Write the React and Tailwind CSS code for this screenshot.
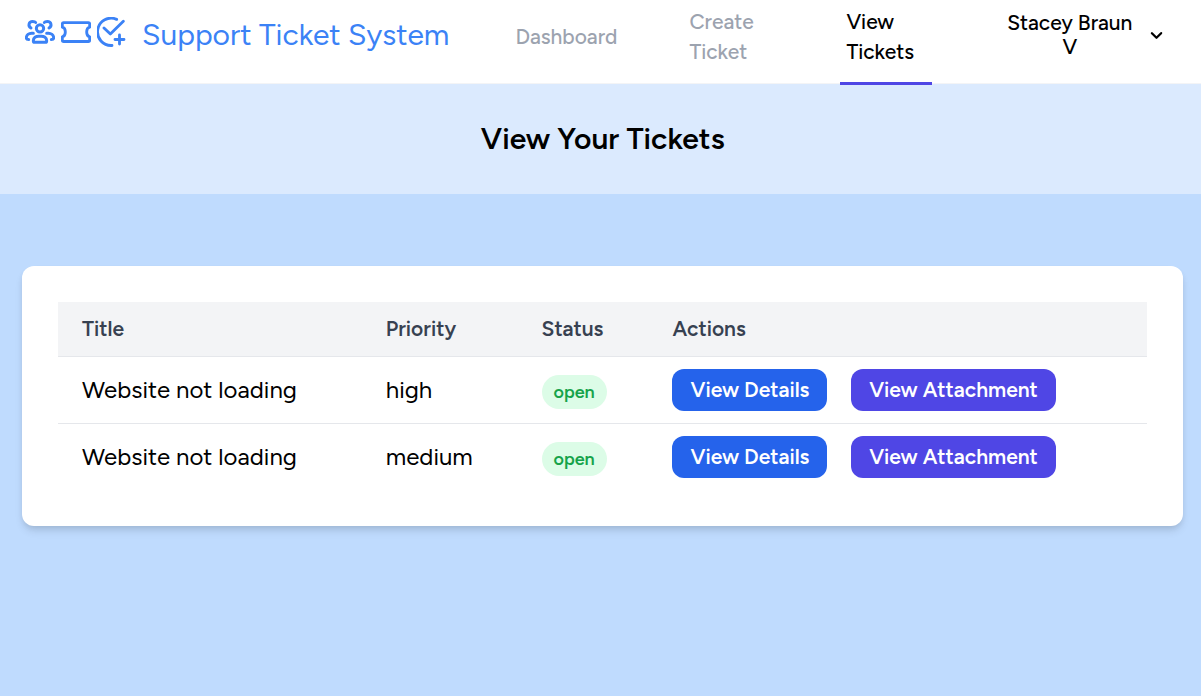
import React from "react";

const nav = "font-medium text-[21px] leading-[30px]";

function GroupIcon() {
  return (
    <svg className="size-[30px]" viewBox="0 0 90 90" fill="none" stroke="currentColor" strokeWidth="9" strokeLinecap="round" strokeLinejoin="round">
      <circle cx="45" cy="34" r="11" />
      <path d="M25 71c0-9 8-13.500 16-13.500h8c8 0 16 4.500 16 13.500 0 3-1 5-4 5H29c-3 0-4-2-4-5z" />
      <path d="M18 33C8 27 11 13.500 23 13.500c5 0 8 1.500 9 3M72 33c10-6 7-19.500-5-19.500-5 0-8 1.500-9 3" />
      <path d="M11 67.500c-5 0-7-1-7-4.500 0-9 8-14 16-14h5M79 67.500c5 0 7-1 7-4.500 0-9-8-14-16-14h-5" />
    </svg>
  );
}

function TicketIcon() {
  return (
    <svg className="size-[30px]" viewBox="0 0 90 90" fill="none" stroke="currentColor" strokeWidth="8.5" strokeLinecap="round" strokeLinejoin="round">
      <path d="M7.500 17h75q3.500 0 3.500 3.500v10c-12 3-12 26 0 29v10.500q0 3.500-3.500 3.500h-75q-3.500 0-3.500-3.500v-10.500c12-3 12-26 0-29v-10q0-3.500 3.500-3.500z" />
    </svg>
  );
}

function CheckPlusIcon() {
  return (
    <svg className="size-[30px]" viewBox="0 0 90 90" fill="none" stroke="currentColor" strokeWidth="8.5" strokeLinecap="round" strokeLinejoin="round">
      <path d="M59 7A41 41 0 1 0 45 85.500M21 33l19 18L79 13M67.500 54v27M54 67.500h27" />
    </svg>
  );
}

const rows = [
  { title: "Website not loading", priority: "high" },
  { title: "Website not loading", priority: "medium" },
];

const columns = "grid grid-cols-[303.8px_155.8px_130.9px_1fr] pl-6";

export default function App() {
  return (
    <div className="min-h-screen bg-[#bfdbfe] font-[Figtree,Lato,sans-serif] text-black">
      <header className="flex h-[84px] items-start border-b border-gray-100 bg-white">
        <div className="ml-[25px] mt-[17px] flex gap-1.5 text-[#3b82f6]">
          <GroupIcon />
          <TicketIcon />
          <CheckPlusIcon />
        </div>
        <h1 className="ml-[15px] mt-[12px] w-[373.4px] whitespace-nowrap text-[30px] leading-[45px] text-[#3b82f6]">Support Ticket System</h1>
        <nav className="flex">
          <a className={`${nav} mt-[22px] w-[174px] text-[#9ca3af]`}>Dashboard</a>
          <a className={`${nav} mt-[7px] w-[150.6px] text-[#9ca3af]`}>Create<br />Ticket</a>
          <a className={`${nav} h-[85px] w-[92px] border-b-[3px] border-[#4f46e5] pl-[6.4px] pt-[7px]`}>View<br />Tickets</a>
        </nav>
        <button className="ml-[74.8px] mt-[11px] flex items-center text-[21px] font-medium leading-6">
          <span className="w-[126px] whitespace-nowrap text-center">Stacey Braun<br />V</span>
          <svg className="ml-[12.7px] size-[23px]" viewBox="0 0 20 20" fill="currentColor">
            <path fillRule="evenodd" d="M5.293 7.293a1 1 0 011.414 0L10 10.586l3.293-3.293a1 1 0 111.414 1.414l-4 4a1 1 0 01-1.414 0l-4-4a1 1 0 010-1.414z" clipRule="evenodd" />
          </svg>
        </button>
      </header>
      <div className="flex h-[110px] items-center justify-center bg-[#dbeafe] pl-[4.5px]">
        <h2 className="text-[30px] font-semibold leading-9">View Your Tickets</h2>
      </div>
      <main className="pl-[22px] pr-[18px] pt-[72px]">
        <section className="h-[260px] rounded-xl bg-white p-9 shadow-[0_6px_9px_-1px_rgba(0,0,0,0.1),0_3px_6px_-2px_rgba(0,0,0,0.1)]">
          <div className={`${columns} h-[55px] items-center border-b border-[#e5e7eb] bg-[#f3f4f6] text-[21px] font-semibold text-[#374151]`}>
            <span>Title</span><span>Priority</span><span>Status</span><span>Actions</span>
          </div>
          {rows.map((row) => (
            <div key={row.priority} className={`${columns} h-[67px] items-center border-b border-[#e5e7eb] text-2xl last:border-transparent`}>
              <span>{row.title}</span>
              <span>{row.priority}</span>
              <span className="mt-1 flex h-[34px] w-[65px] items-center justify-center rounded-full bg-[#dcfce7] text-lg font-semibold text-[#16a34a]">open</span>
              <span className="-ml-[0.5px] flex gap-6 text-[21px] font-semibold text-white">
                <button className="h-[42px] w-[155px] rounded-xl bg-[#2563eb] pl-px">View Details</button>
                <button className="h-[42px] w-[205px] rounded-xl bg-[#4f46e5]">View Attachment</button>
              </span>
            </div>
          ))}
        </section>
      </main>
    </div>
  );
}
